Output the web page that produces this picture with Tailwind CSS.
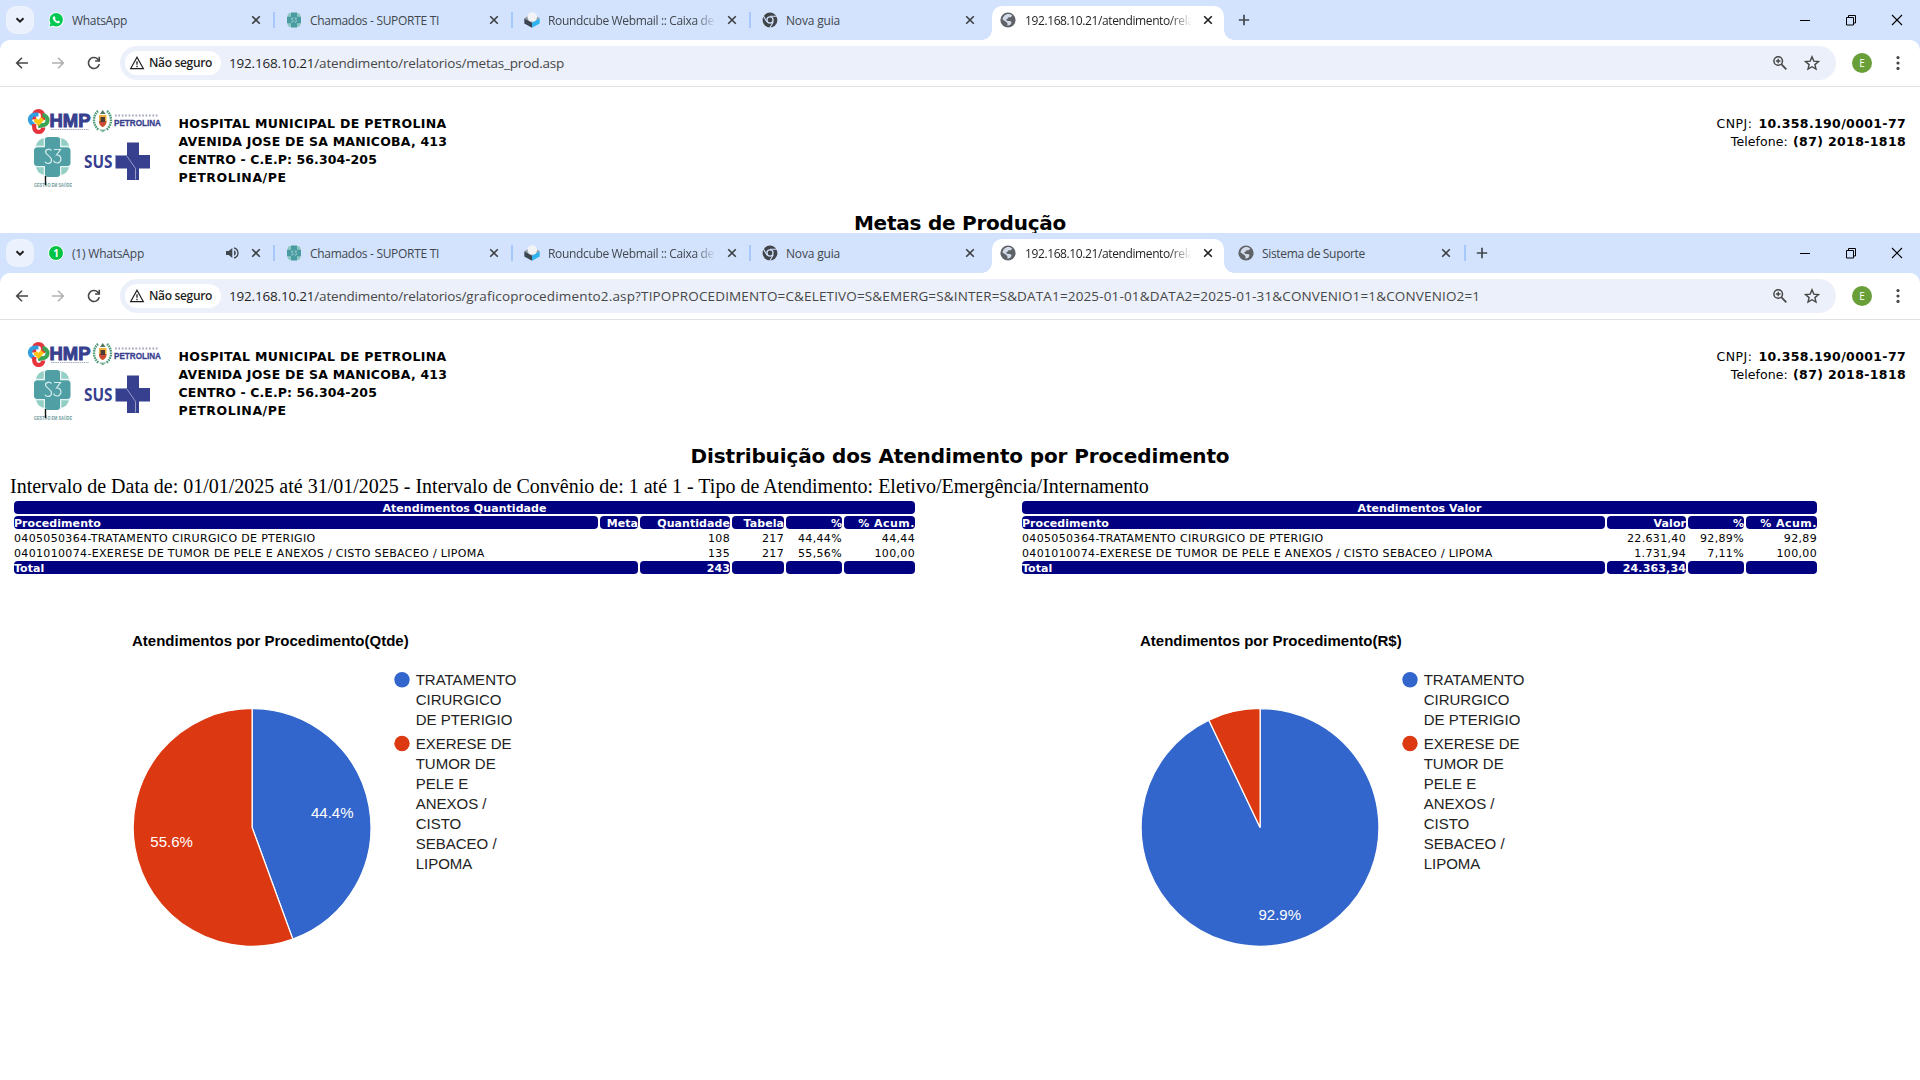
<!DOCTYPE html>
<html lang="pt-BR">
<head>
<meta charset="utf-8">
<title>Distribuição dos Atendimento por Procedimento</title>
<script src="https://cdn.jsdelivr.net/npm/@tailwindcss/browser@4"></script>
</head>
<body class="h-[1080px] w-[1920px] overflow-hidden bg-white text-black">

<!-- shared icons -->
<svg class="hidden">
  <symbol id="close" viewBox="0 0 16 16"><path d="M4.2 4.2l7.6 7.6M11.8 4.2l-7.6 7.6" fill="none" stroke="currentColor" stroke-width="1.6"/></symbol>
  <symbol id="plus" viewBox="0 0 16 16"><path d="M8 2.8v10.4M2.8 8h10.4" fill="none" stroke="currentColor" stroke-width="1.7"/></symbol>
  <symbol id="chev" viewBox="0 0 16 16"><path d="M4.5 6.2L8 9.7l3.5-3.5" fill="none" stroke="currentColor" stroke-width="2"/></symbol>
  <symbol id="globe" viewBox="0 0 16 16"><circle cx="8" cy="8" r="7.6" fill="#5f6368"/><path d="M6.7 2.2c2-.6 4.300.1 5.600 1.600L10.500 5.200 8 5.400 7.500 7 5.800 7.600 7.500 9h2.800l1.300 1.500-1.100 2c-.8.600-2 1.100-3.200 1.100l.2-2.100L6.300 10 2.500 7.600C2.700 5 4.400 2.900 6.700 2.200z" fill="#d3dbe8"/></symbol>
  <symbol id="chrome" viewBox="0 0 16 16"><circle cx="8" cy="8" r="7.400" fill="#41454a"/><circle cx="8" cy="8" r="3.700" fill="#d3e3fd"/><circle cx="8" cy="8" r="2.400" fill="#41454a"/><path d="M8 4.300h7M4.900 10L1.400 4M11.200 10l-3.500 6" stroke="#d3e3fd" stroke-width="1.100"/></symbol>
  <symbol id="s3fav" viewBox="0 0 16 16"><rect x="1.500" y="1" width="13" height="14" rx="3" fill="#8fc8c0"/><path d="M5 .5h6v4.300h4v6.400h-4v4.300H5v-4.300H1V4.800h4z" fill="#4a9ca3"/><path d="M7.300 6H5.800L5.300 7l2 1.500-.6 1.500H5.200M8.700 6h1.800l-.9 1.700 1 .9-.6 1.500H8.700" fill="none" stroke="#b9dcdc" stroke-width=".7"/></symbol>
  <symbol id="cube" viewBox="0 0 16 16"><path d="M.3 6.200L8 10.500v5.300L.3 11.400z" fill="#3c4650"/><path d="M15.700 6.200L8 10.500v5.300l7.700-4.400z" fill="#2fb4f0"/><path d="M.3 6.200L8 2l7.700 4.200L8 10.500z" fill="#8d969e"/><circle cx="8.300" cy="5" r="4.800" fill="#f2f3f4"/><path d="M8.500 9.800a4.800 4.800 0 0 0 4.600-4.500l.3 2L8 10.500z" fill="#c8ccd0"/></symbol>
  <symbol id="wa" viewBox="0 0 16 16"><circle cx="8.200" cy="7.800" r="7.600" fill="#fff"/><path d="M.4 15.700L1.600 11.500 4.600 14.600z" fill="#fff"/><circle cx="8.200" cy="7.800" r="6.700" fill="#00c853"/><path d="M1.500 14.600l1-3.600 2.500 2.700z" fill="#00c853"/><path d="M5.700 4.500l1-.2.9 1.900-.7.900c.5 1 1.300 1.800 2.400 2.300l.8-.9 1.900.9c0 1.300-1.200 2-2.300 1.800-2.500-.5-4.500-2.600-5-4.600-.1-.9.400-1.700 1-2.100z" fill="#fff"/></symbol>
  <symbol id="back" viewBox="0 0 16 16"><path d="M14 8H3M8 2.700L2.700 8 8 13.300" fill="none" stroke="currentColor" stroke-width="1.600"/></symbol>
  <symbol id="fwd" viewBox="0 0 16 16"><path d="M2 8h11M8 2.700L13.300 8 8 13.300" fill="none" stroke="currentColor" stroke-width="1.600"/></symbol>
  <symbol id="reload" viewBox="0 0 16 16"><path d="M13.300 9.200A5.500 5.500 0 1 1 11.800 4.100L13.400 5.700" fill="none" stroke="currentColor" stroke-width="1.600"/><path d="M14.100 1.800v5H9.100v-1.600h3.400V1.800z" fill="currentColor"/></symbol>
  <symbol id="warn" viewBox="0 0 16 16"><path d="M8 2.300L14.300 13.500H1.700z" fill="none" stroke="currentColor" stroke-width="1.250"/><path d="M8 6.300v3.500M8 10.700v1.500" stroke="currentColor" stroke-width="1.300"/></symbol>
  <symbol id="zoomi" viewBox="0 0 16 16"><circle cx="6.200" cy="6" r="4.300" fill="none" stroke="currentColor" stroke-width="1.500"/><path d="M9.300 9.200l5 5.200" stroke="currentColor" stroke-width="1.700"/><path d="M6.200 3.700v4.600M3.900 6h4.600" stroke="currentColor" stroke-width="1.400"/></symbol>
  <symbol id="star" viewBox="0 0 16 16"><path d="M8 1.800l1.800 4.300 4.700.4-3.600 3.100 1.100 4.500L8 11.700l-4 2.400 1.100-4.500L1.500 6.500l4.700-.4z" fill="none" stroke="currentColor" stroke-width="1.400"/></symbol>
  <symbol id="dots" viewBox="0 0 16 16"><g fill="currentColor"><circle cx="8" cy="2.600" r="1.600"/><circle cx="8" cy="8" r="1.600"/><circle cx="8" cy="13.400" r="1.600"/></g></symbol>
  <symbol id="min" viewBox="0 0 12 12"><path d="M1 6.500h10" stroke="#000"/></symbol>
  <symbol id="rest" viewBox="0 0 12 12"><path d="M1.500 3.500h7v7.500h-7zM3.500 3.500v-2h7v7.500h-2" fill="none" stroke="#000"/></symbol>
  <symbol id="x" viewBox="0 0 12 12"><path d="M1 1l10 10M11 1L1 11" stroke="#000" stroke-width="1.100"/></symbol>
  <symbol id="sound" viewBox="0 0 16 16"><path d="M2 6v4h2.700L8.300 13V3L4.700 6zM10 5.200v5.600c1-.4 1.800-1.500 1.800-2.800S11 5.600 10 5.200z" fill="currentColor"/><path d="M10 2.800a5.400 5.400 0 0 1 0 10.400" fill="none" stroke="currentColor" stroke-width="1.300"/></symbol>
  <symbol id="logos" viewBox="0 0 140 90">
    <!-- HMP -->
    <g fill="none" stroke-width="4.200">
      <path d="M7 12.500V8.500a4.500 4.500 0 0 1 9 0V13" stroke="#e5343b"/>
      <path d="M11.500 7.500H8a5 5 0 0 0-5 5 5 5 0 0 0 4.500 5" stroke="#2f9fe0"/>
      <path d="M7.200 17v3.500a4.400 4.400 0 0 0 9 0" stroke="#e5343b"/>
      <path d="M15.500 8.200a5 5 0 0 1 0 10l-4.500 1" stroke="#3aa655"/>
      <path d="M8 12.500l3.500 3.500 4-4.500" stroke="#fdc513"/>
    </g>
    <text x="22.500" y="20" font-family="Liberation Sans, sans-serif" font-weight="700" font-size="18.500" textLength="41" lengthAdjust="spacingAndGlyphs" fill="#37408f" stroke="#37408f" stroke-width="1">HMP</text>
    <path d="M24 22.500h38" stroke="#a8acc9" stroke-width="1" stroke-dasharray="1.500 .7"/>
    <!-- city crest -->
    <path d="M71 4c-5 4-6 14 1 19M80 4c5 4 6 14-1 19" fill="none" stroke="#4f9a78" stroke-width="2.400" stroke-dasharray="1.600 .8"/>
    <path d="M72 8h7.500v7c0 3-2 4-3.800 5-1.800-1-3.700-2-3.700-5z" fill="#efb13c"/><path d="M72 14h7.500c0 3.500-2 5-3.800 6-1.800-1-3.700-2.500-3.700-6z" fill="#c94b34"/><path d="M73.500 10h4.500v5h-4.500z" fill="#4c3c33"/><path d="M73 7l2.700-4L78.500 7z" fill="#51745c"/><path d="M72 22.500h7.500l-3.700 3z" fill="#7fb79a"/>
    <path d="M88 8.500h44" stroke="#a5a8be" stroke-width="2" stroke-dasharray="1.700 1.700"/>
    <text x="87" y="18.500" font-family="Liberation Sans, sans-serif" font-weight="700" font-size="9.500" textLength="47" lengthAdjust="spacingAndGlyphs" fill="#37408f" stroke="#37408f" stroke-width=".3">PETROLINA</text>
    <!-- S3 -->
    <rect x="9" y="31" width="33" height="37" rx="9" fill="#94cfc6"/>
    <path d="M17.500 30v9.500H8M33.500 30v9.500H43M17.500 69v-9.500H8M33.500 69v-9.500H43" fill="none" stroke="#e6f4f2" stroke-width="1.600"/>
    <path d="M21 30h9q3 0 3 3v7.500h7q3.500 0 3.500 3v12.500q0 3-3.500 3h-7v8q0 3-3 3h-9q-3 0-3-3v-8h-7.500q-3.500 0-3.500-3V43.500q0-3 3.500-3H18V33q0-3 3-3z" fill="#4f9fa5"/>
    <path d="M24.500 43.500c-2-2.200-6-1.500-6 1.500s6 4 6 8-5 4.500-6.500 1.800M27 42.500h6.500l-4 5.500c6-.5 5.500 8 .8 8-1.900 0-3.300-1-3.600-2.500" fill="none" stroke="#d7eeee" stroke-width="1.200"/>
    <text x="7" y="79.500" font-family="Liberation Sans, sans-serif" font-weight="700" font-size="4.600" textLength="38" lengthAdjust="spacingAndGlyphs" fill="#6f9a9c">GESTÃO EM SAÚDE</text>
    <path d="M18.500 69v9" stroke="#111" stroke-width="1.400"/>
    <!-- SUS -->
    <text x="57" y="61" font-family="Open Sans, sans-serif" font-weight="700" font-size="18.500" textLength="28.500" lengthAdjust="spacingAndGlyphs" fill="#37408f">SUS</text>
    <path d="M100 35.500h12v12.500h11v13.500h-11v11.500h-12v-11.500h-11.500v-13.500H100z" fill="#37408f"/>
    <path d="M88.500 48.500h11l9 13v11" fill="none" stroke="#aeb2d6" stroke-width=".8"/>
  </symbol>
</svg>

<!-- ===== first browser window ===== -->
<section class="flex h-[233px] flex-col overflow-hidden">
  <div class="flex h-10 shrink-0 items-center bg-[#d3e3fd] pl-1.5 font-['Open_Sans',sans-serif] text-[12px] text-[#41474d]">
    <div class="mr-[3px] flex h-7 w-7 items-center justify-center rounded-[10px] bg-[#ebf2fe] text-[#1f1f1f]"><svg class="h-4 w-4"><use href="#chev"/></svg></div>
    <div class="flex h-4 w-[238px] items-center border-r-2 border-[#a8c7fa] pl-[11px] pr-[9px]"><svg class="mr-2 h-4 w-4 shrink-0"><use href="#wa"/></svg><span class="w-[176px] pt-0.5 whitespace-nowrap tracking-[-0.3px]">WhatsApp</span><svg class="h-4 w-4 shrink-0 text-[#3c4043]"><use href="#close"/></svg></div>
    <div class="flex h-4 w-[238px] items-center border-r-2 border-[#a8c7fa] pl-[11px] pr-[9px]"><svg class="mr-2 h-4 w-4 shrink-0"><use href="#s3fav"/></svg><span class="w-[176px] pt-0.5 whitespace-nowrap tracking-[-0.304px]">Chamados - SUPORTE TI</span><svg class="h-4 w-4 shrink-0 text-[#3c4043]"><use href="#close"/></svg></div>
    <div class="flex h-4 w-[238px] items-center border-r-2 border-[#a8c7fa] pl-[11px] pr-[9px]"><svg class="mr-2 h-4 w-4 shrink-0"><use href="#cube"/></svg><span class="mr-2 w-[168px] pt-0.5 whitespace-nowrap tracking-[-0.343px] [mask-image:linear-gradient(to_right,black_88%,transparent)]">Roundcube Webmail :: Caixa de</span><svg class="h-4 w-4 shrink-0 text-[#3c4043]"><use href="#close"/></svg></div>
    <div class="flex h-4 w-[238px] items-center pl-[11px] pr-[11px]"><svg class="mr-2 h-4 w-4 shrink-0"><use href="#chrome"/></svg><span class="w-[176px] pt-0.5 whitespace-nowrap tracking-[-0.18px]">Nova guia</span><svg class="h-4 w-4 shrink-0 text-[#3c4043]"><use href="#close"/></svg></div>
    <div class="relative mx-[3px] mt-1.5 flex h-[34px] w-[232px] items-center rounded-t-[10px] bg-white pb-1.5 pl-2 pr-2 text-[#1f1f1f]">
      <span class="absolute -left-[10px] bottom-0 h-[10px] w-[10px] bg-[radial-gradient(circle_at_0_0,transparent_9.5px,white_10px)]"></span>
      <span class="absolute -right-[10px] bottom-0 h-[10px] w-[10px] bg-[radial-gradient(circle_at_100%_0,transparent_9.5px,white_10px)]"></span>
      <svg class="mr-[9px] h-4 w-4 shrink-0"><use href="#globe"/></svg><span class="mr-2 w-[167px] pt-0.5 whitespace-nowrap tracking-[-0.39px] [mask-image:linear-gradient(to_right,black_86%,transparent)]">192.168.10.21/atendimento/rela</span><svg class="h-4 w-4 shrink-0"><use href="#close"/></svg></div>
    <svg class="ml-[9px] h-4 w-4 text-[#41474d]"><use href="#plus"/></svg>
    <div class="ml-auto mr-[17px] flex gap-[34px]"><svg class="h-3 w-3"><use href="#min"/></svg><svg class="h-3 w-3"><use href="#rest"/></svg><svg class="h-3 w-3"><use href="#x"/></svg></div>
  </div>
  <div class="shrink-0 bg-[#d3e3fd]">
    <div class="flex h-[47px] items-center rounded-t-[10px] border-b border-[#dfe1e5] bg-white pl-3.5 font-['Open_Sans',sans-serif] text-[#474747]">
      <svg class="h-4 w-4"><use href="#back"/></svg>
      <svg class="ml-5 h-4 w-4 text-[#aeb0b2]"><use href="#fwd"/></svg>
      <svg class="ml-5 h-4 w-4"><use href="#reload"/></svg>
      <div class="ml-[18px] flex h-[34px] w-[1716px] items-center rounded-full bg-[#ecf0fa] pl-[5px]">
        <div class="flex h-6 w-24 items-center rounded-full bg-white pl-1 text-[#1f1f1f]"><svg class="mr-1 h-4 w-4"><use href="#warn"/></svg><span class="whitespace-nowrap text-[12px] font-semibold tracking-[-0.33px]">Não seguro</span></div>
        <span class="ml-2 whitespace-nowrap text-[13.5px] tracking-[-0.19px]"><span class="text-[#1f1f1f]">192.168.10.21</span>/atendimento/relatorios/metas_prod.asp</span>
        <svg class="ml-auto h-4 w-4"><use href="#zoomi"/></svg><svg class="ml-4 mr-4 h-4 w-4"><use href="#star"/></svg>
      </div>
      <span class="ml-4 flex h-5 w-5 items-center justify-center rounded-full bg-[#689f38] text-[10px] text-white">E</span>
      <svg class="ml-[18px] h-4 w-4"><use href="#dots"/></svg>
    </div>
  </div>
  <div class="flex px-[14px] font-['DejaVu_Sans',Verdana,sans-serif] text-[12.5px] leading-[18px]">
    <svg class="ml-[13px] mt-5 h-[90px] w-[140px]"><use href="#logos"/></svg>
    <div class="ml-[11.5px] pt-7 font-bold">
      <p class="tracking-[0.34px]">HOSPITAL MUNICIPAL DE PETROLINA</p><p class="tracking-[0.22px]">AVENIDA JOSE DE SA MANICOBA, 413</p><p class="tracking-[0.09px]">CENTRO - C.E.P: 56.304-205</p><p class="tracking-[0.54px]">PETROLINA/PE</p>
    </div>
    <div class="ml-auto pt-7 text-right"><p><span class="mr-[1.5px] tracking-[0.5px]">CNPJ: </span><b class="tracking-[0.36px]">10.358.190/0001-77</b></p><p><span class="mr-px tracking-[0.1px]">Telefone: </span><b class="tracking-[0.36px]">(87) 2018-1818</b></p></div>
  </div>
  <h1 class="mt-3.5 text-center font-['DejaVu_Sans',Verdana,sans-serif] text-[20px] leading-6 font-bold tracking-[-0.24px]">Metas de Produção</h1>
</section>

<!-- ===== second browser window ===== -->
<section class="flex h-[847px] flex-col overflow-hidden bg-white">
  <div class="flex h-10 shrink-0 items-center bg-[#d3e3fd] pl-1.5 font-['Open_Sans',sans-serif] text-[12px] text-[#41474d]">
    <div class="mr-[3px] flex h-7 w-7 items-center justify-center rounded-[10px] bg-[#ebf2fe] text-[#1f1f1f]"><svg class="h-4 w-4"><use href="#chev"/></svg></div>
    <div class="flex h-4 w-[238px] items-center border-r-2 border-[#a8c7fa] pl-[11px] pr-[9px]"><span class="mr-2 flex h-4 w-4 shrink-0 items-center justify-center rounded-full border border-white bg-[#00c244] text-[10px] leading-none font-bold text-white">1</span><span class="w-[152px] pt-0.5 whitespace-nowrap tracking-[-0.2px]">(1) WhatsApp</span><svg class="mr-2 h-4 w-4 shrink-0"><use href="#sound"/></svg><svg class="h-4 w-4 shrink-0 text-[#3c4043]"><use href="#close"/></svg></div>
    <div class="flex h-4 w-[238px] items-center border-r-2 border-[#a8c7fa] pl-[11px] pr-[9px]"><svg class="mr-2 h-4 w-4 shrink-0"><use href="#s3fav"/></svg><span class="w-[176px] pt-0.5 whitespace-nowrap tracking-[-0.304px]">Chamados - SUPORTE TI</span><svg class="h-4 w-4 shrink-0 text-[#3c4043]"><use href="#close"/></svg></div>
    <div class="flex h-4 w-[238px] items-center border-r-2 border-[#a8c7fa] pl-[11px] pr-[9px]"><svg class="mr-2 h-4 w-4 shrink-0"><use href="#cube"/></svg><span class="mr-2 w-[168px] pt-0.5 whitespace-nowrap tracking-[-0.343px] [mask-image:linear-gradient(to_right,black_88%,transparent)]">Roundcube Webmail :: Caixa de</span><svg class="h-4 w-4 shrink-0 text-[#3c4043]"><use href="#close"/></svg></div>
    <div class="flex h-4 w-[238px] items-center pl-[11px] pr-[11px]"><svg class="mr-2 h-4 w-4 shrink-0"><use href="#chrome"/></svg><span class="w-[176px] pt-0.5 whitespace-nowrap tracking-[-0.18px]">Nova guia</span><svg class="h-4 w-4 shrink-0 text-[#3c4043]"><use href="#close"/></svg></div>
    <div class="relative mx-[3px] mt-1.5 flex h-[34px] w-[232px] items-center rounded-t-[10px] bg-white pb-1.5 pl-2 pr-2 text-[#1f1f1f]">
      <span class="absolute -left-[10px] bottom-0 h-[10px] w-[10px] bg-[radial-gradient(circle_at_0_0,transparent_9.5px,white_10px)]"></span>
      <span class="absolute -right-[10px] bottom-0 h-[10px] w-[10px] bg-[radial-gradient(circle_at_100%_0,transparent_9.5px,white_10px)]"></span>
      <svg class="mr-[9px] h-4 w-4 shrink-0"><use href="#globe"/></svg><span class="mr-2 w-[167px] pt-0.5 whitespace-nowrap tracking-[-0.39px] [mask-image:linear-gradient(to_right,black_86%,transparent)]">192.168.10.21/atendimento/rela</span><svg class="h-4 w-4 shrink-0"><use href="#close"/></svg></div>
    <div class="flex h-4 w-[239px] items-center border-r-2 border-[#a8c7fa] pl-[11px] pr-[10px]"><svg class="mr-2 h-4 w-4 shrink-0"><use href="#globe"/></svg><span class="w-[176px] pt-0.5 whitespace-nowrap tracking-[-0.326px]">Sistema de Suporte</span><svg class="h-4 w-4 shrink-0 text-[#3c4043]"><use href="#close"/></svg></div>
    <svg class="ml-2 h-4 w-4 text-[#41474d]"><use href="#plus"/></svg>
    <div class="ml-auto mr-[17px] flex gap-[34px]"><svg class="h-3 w-3"><use href="#min"/></svg><svg class="h-3 w-3"><use href="#rest"/></svg><svg class="h-3 w-3"><use href="#x"/></svg></div>
  </div>
  <div class="shrink-0 bg-[#d3e3fd]">
    <div class="flex h-[47px] items-center rounded-t-[10px] border-b border-[#dfe1e5] bg-white pl-3.5 font-['Open_Sans',sans-serif] text-[#474747]">
      <svg class="h-4 w-4"><use href="#back"/></svg>
      <svg class="ml-5 h-4 w-4 text-[#aeb0b2]"><use href="#fwd"/></svg>
      <svg class="ml-5 h-4 w-4"><use href="#reload"/></svg>
      <div class="ml-[18px] flex h-[34px] w-[1716px] items-center rounded-full bg-[#ecf0fa] pl-[5px]">
        <div class="flex h-6 w-24 items-center rounded-full bg-white pl-1 text-[#1f1f1f]"><svg class="mr-1 h-4 w-4"><use href="#warn"/></svg><span class="whitespace-nowrap text-[12px] font-semibold tracking-[-0.33px]">Não seguro</span></div>
        <span class="ml-2 whitespace-nowrap text-[13.5px]"><span class="tracking-[-0.19px]"><span class="text-[#1f1f1f]">192.168.10.21</span>/atendimento/relatorios/</span><span class="tracking-[0.15px]">graficoprocedimento2.asp?TIPOPROCEDIMENTO=C&amp;ELETIVO=S&amp;EMERG=S&amp;INTER=S&amp;DATA1=2025-01-01&amp;DATA2=2025-01-31&amp;CONVENIO1=1&amp;CONVENIO2=1</span></span>
        <svg class="ml-auto h-4 w-4"><use href="#zoomi"/></svg><svg class="ml-4 mr-4 h-4 w-4"><use href="#star"/></svg>
      </div>
      <span class="ml-4 flex h-5 w-5 items-center justify-center rounded-full bg-[#689f38] text-[10px] text-white">E</span>
      <svg class="ml-[18px] h-4 w-4"><use href="#dots"/></svg>
    </div>
  </div>
  <div class="flex px-[14px] font-['DejaVu_Sans',Verdana,sans-serif] text-[12.5px] leading-[18px]">
    <svg class="ml-[13px] mt-5 h-[90px] w-[140px]"><use href="#logos"/></svg>
    <div class="ml-[11.5px] pt-7 font-bold">
      <p class="tracking-[0.34px]">HOSPITAL MUNICIPAL DE PETROLINA</p><p class="tracking-[0.22px]">AVENIDA JOSE DE SA MANICOBA, 413</p><p class="tracking-[0.09px]">CENTRO - C.E.P: 56.304-205</p><p class="tracking-[0.54px]">PETROLINA/PE</p>
    </div>
    <div class="ml-auto pt-7 text-right"><p><span class="mr-[1.5px] tracking-[0.5px]">CNPJ: </span><b class="tracking-[0.36px]">10.358.190/0001-77</b></p><p><span class="mr-px tracking-[0.1px]">Telefone: </span><b class="tracking-[0.36px]">(87) 2018-1818</b></p></div>
  </div>
  <h1 class="mt-3.5 text-center font-['DejaVu_Sans',Verdana,sans-serif] text-[20px] leading-6 font-bold tracking-[-0.125px]">Distribuição dos Atendimento por Procedimento</h1>
  <p class="mt-[6px] pl-2.5 font-['Liberation_Serif',serif] text-[20px] leading-[24px]">Intervalo de Data de: 01/01/2025 até 31/01/2025 - Intervalo de Convênio de: 1 até 1 - Tipo de Atendimento: Eletivo/Emergência/Internamento</p>

  <div class="mt-[3px] flex pl-3.5 font-['DejaVu_Sans',Verdana,sans-serif] text-[11px] leading-[15px] tracking-[0.34px]">
    <div class="grid w-[901px] auto-rows-[13px] grid-cols-[584px_38px_90px_52px_56px_71px] gap-0.5 whitespace-nowrap text-right [&>b]:rounded-[4px] [&>b]:bg-[#000080] [&>b]:tracking-[0.06px] [&>b]:text-white">
      <b class="col-span-6 text-center">Atendimentos Quantidade</b>
      <b class="text-left">Procedimento</b><b>Meta</b><b>Quantidade</b><b>Tabela</b><b>%</b><b><span class="tracking-[0.5px]">% Acum.</span></b>
      <span class="text-left">0405050364-TRATAMENTO CIRURGICO DE PTERIGIO</span><span></span><span>108</span><span>217</span><span>44,44%</span><span>44,44</span>
      <span class="text-left">0401010074-EXERESE DE TUMOR DE PELE E ANEXOS / CISTO SEBACEO / LIPOMA</span><span></span><span>135</span><span>217</span><span>55,56%</span><span>100,00</span>
      <b class="col-span-2 text-left">Total</b><b>243</b><b></b><b></b><b></b>
    </div>
    <div class="ml-[107px] grid w-[795px] auto-rows-[13px] grid-cols-[583px_79px_56px_71px] gap-0.5 whitespace-nowrap text-right [&>b]:rounded-[4px] [&>b]:bg-[#000080] [&>b]:tracking-[0.06px] [&>b]:text-white">
      <b class="col-span-4 text-center">Atendimentos Valor</b>
      <b class="text-left">Procedimento</b><b>Valor</b><b>%</b><b><span class="tracking-[0.5px]">% Acum.</span></b>
      <span class="text-left">0405050364-TRATAMENTO CIRURGICO DE PTERIGIO</span><span>22.631,40</span><span>92,89%</span><span>92,89</span>
      <span class="text-left">0401010074-EXERESE DE TUMOR DE PELE E ANEXOS / CISTO SEBACEO / LIPOMA</span><span>1.731,94</span><span>7,11%</span><span>100,00</span>
      <b class="text-left">Total</b><b><span class="tracking-[0.15px]">24.363,34</span></b><b></b><b></b>
    </div>
  </div>

  <div class="mt-[46px] flex pl-[100px] font-['Liberation_Sans',Arial,sans-serif] text-[15px]">
    <svg class="h-[340px] w-[1008px]" viewBox="100 620 1008 340">
      <text x="132" y="646" font-weight="700">Atendimentos por Procedimento(Qtde)</text>
      <g stroke="#fff" stroke-width="1.250">
        <path d="M252.100 827.400V708.500a118.900 118.900 0 0 1 40.700 230.600z" fill="#3366cc"/>
        <path d="M252.100 827.400L292.800 939.100A118.900 118.900 0 1 1 252.100 708.500z" fill="#dc3912"/>
      </g>
      <text x="311" y="818" fill="#fff">44.4%</text><text x="150.300" y="847" fill="#fff">55.6%</text>
      <circle cx="402" cy="679.700" r="7.700" fill="#3366cc"/><circle cx="402" cy="743.500" r="7.700" fill="#dc3912"/>
      <g fill="#222"><text x="415.700" y="685">TRATAMENTO</text><text x="415.700" y="705">CIRURGICO</text><text x="415.700" y="725">DE PTERIGIO</text><text x="415.700" y="749">EXERESE DE</text><text x="415.700" y="769">TUMOR DE</text><text x="415.700" y="789">PELE E</text><text x="415.700" y="809">ANEXOS /</text><text x="415.700" y="829">CISTO</text><text x="415.700" y="849">SEBACEO /</text><text x="415.700" y="869">LIPOMA</text></g>
    </svg>
    <svg class="h-[340px] w-[700px]" viewBox="1108 620 700 340">
      <text x="1140" y="646" font-weight="700">Atendimentos por Procedimento(R$)</text>
      <g stroke="#fff" stroke-width="1.250">
        <path d="M1260.100 827.400V708.500a118.900 118.900 0 1 1-51.300 11.600z" fill="#3366cc"/>
        <path d="M1260.100 827.400L1208.800 720.100A118.900 118.900 0 0 1 1260.100 708.500z" fill="#dc3912"/>
      </g>
      <text x="1258.500" y="920" fill="#fff">92.9%</text>
      <circle cx="1410" cy="679.700" r="7.700" fill="#3366cc"/><circle cx="1410" cy="743.500" r="7.700" fill="#dc3912"/>
      <g fill="#222"><text x="1423.700" y="685">TRATAMENTO</text><text x="1423.700" y="705">CIRURGICO</text><text x="1423.700" y="725">DE PTERIGIO</text><text x="1423.700" y="749">EXERESE DE</text><text x="1423.700" y="769">TUMOR DE</text><text x="1423.700" y="789">PELE E</text><text x="1423.700" y="809">ANEXOS /</text><text x="1423.700" y="829">CISTO</text><text x="1423.700" y="849">SEBACEO /</text><text x="1423.700" y="869">LIPOMA</text></g>
    </svg>
  </div>
</section>
</body>
</html>
